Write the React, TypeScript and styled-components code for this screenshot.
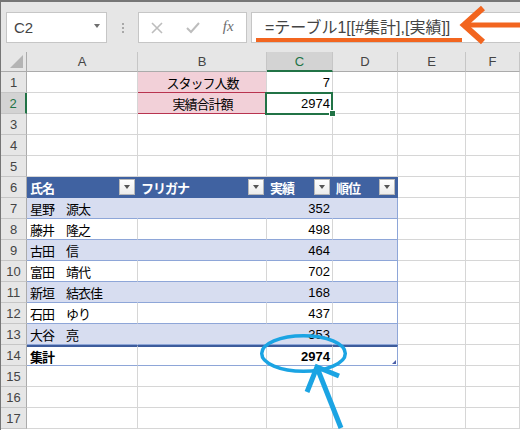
import React from "react";
import styled, { createGlobalStyle, css } from "styled-components";

const GRID = "#d6d6d6";
const HEAD_LINE = "#c6c6c6";
const HEAD_EDGE = "#ababab";
const GREEN = "#217346";
const T_HEAD = "#4062a1";
const T_BAND = "#d7ddf0";
const T_LINE = "#8ea6d8";
const T_DARK = "#3d5c9c";
const PINK = "#f2d0d8";
const RED = "#b8334f";
const ORANGE = "#f2651f";
const BLUE = "#1ba4e3";
const FONT = `"Liberation Sans", "Noto Sans CJK JP", sans-serif`;
const COLS = "26px 111px 129px 66px 65px 68px 1fr";

const GlobalStyle = createGlobalStyle`
  html, body {
    margin: 0;
    padding: 0;
    background: #fff;
  }
  #root {
    width: 520px;
    height: 430px;
    overflow: hidden;
  }
`;

// ! 전체 창
const Frame = styled.div`
  position: relative;
  box-sizing: border-box;
  width: 520px;
  height: 430px;
  border-top: 2px solid #767676;
  border-left: 1px solid #767676;
  background: #e6e6e6;
  overflow: hidden;
  display: flex;
  flex-direction: column;
  font-family: ${FONT};
`;

// 수식 입력줄
const FormulaBar = styled.div`
  box-sizing: border-box;
  height: 50px;
  flex: none;
  display: flex;
  align-items: flex-start;
  padding: 10px 0 0 5px;
`;

const NameBox = styled.div`
  box-sizing: border-box;
  width: 101px;
  height: 31px;
  display: flex;
  align-items: center;
  justify-content: space-between;
  padding: 0 6px 0 7px;
  background: #fff;
  border: 1px solid ${HEAD_LINE};
  font-size: 15px;
  color: #444;
`;

const DropArrow = styled.span`
  width: 0;
  height: 0;
  border-left: 3px solid transparent;
  border-right: 3px solid transparent;
  border-top: 4px solid #6e6e6e;
  margin-top: -4px;
`;

const Grip = styled.div`
  width: 31px;
  height: 31px;
  display: flex;
  flex-direction: column;
  align-items: center;
  justify-content: center;
  gap: 2px;

  i {
    width: 2px;
    height: 2px;
    background: #a8a8a8;
  }
`;

const ButtonBox = styled.div`
  box-sizing: border-box;
  width: 109px;
  height: 31px;
  display: flex;
  background: #fff;
  border: 1px solid ${HEAD_LINE};
`;

const ToolButton = styled.span`
  width: 36px;
  display: flex;
  align-items: center;
  justify-content: center;
`;

const Fx = styled.span`
  font-family: "Liberation Serif", serif;
  font-style: italic;
  font-size: 15px;
  color: #6d6d6d;
  margin-top: -3px;
`;

const FormulaInput = styled.div`
  box-sizing: border-box;
  flex: 1;
  height: 31px;
  margin-left: 4px;
  padding: 0 0 4px 13px;
  display: flex;
  align-items: center;
  background: #fff;
  border: 1px solid ${HEAD_LINE};
  border-right: none;
  font-size: 16px;
  color: #444;
  white-space: nowrap;
  overflow: hidden;
`;

// 시트 격자
const Sheet = styled.div`
  flex: 1;
  display: grid;
  grid-template-columns: ${COLS};
  grid-template-rows: 20px repeat(17, 21px);
  background: #fff;
`;

const Corner = styled.div`
  box-sizing: border-box;
  display: flex;
  align-items: flex-end;
  justify-content: flex-end;
  padding: 3px;
  background: #e6e6e6;
  border-right: 1px solid ${HEAD_EDGE};
  border-bottom: 1px solid ${HEAD_EDGE};
`;

const ColHead = styled.div<{ $sel?: boolean }>`
  box-sizing: border-box;
  display: flex;
  align-items: center;
  justify-content: center;
  background: ${(p) => (p.$sel ? "#d3d3d3" : "#e6e6e6")};
  border-right: 1px solid ${HEAD_LINE};
  border-bottom: ${(p) => (p.$sel ? `2px solid ${GREEN}` : `1px solid ${HEAD_EDGE}`)};
  font-size: 13px;
  color: ${(p) => (p.$sel ? GREEN : "#444")};
`;

const RowHead = styled.div<{ $sel?: boolean }>`
  box-sizing: border-box;
  display: flex;
  align-items: center;
  justify-content: center;
  background: ${(p) => (p.$sel ? "#d3d3d3" : "#e6e6e6")};
  border-right: ${(p) => (p.$sel ? `2px solid ${GREEN}` : `1px solid ${HEAD_EDGE}`)};
  border-bottom: 1px solid ${HEAD_LINE};
  font-size: 13px;
  color: ${(p) => (p.$sel ? GREEN : "#444")};
`;

type CellProps = {
  $fill?: string;
  $align?: "left" | "center" | "right";
  $bold?: boolean;
  $color?: string;
  $bb?: string;
  $br?: string;
  $bt?: string;
  $tight?: boolean;
  $selected?: boolean;
  $grip?: boolean;
};

const Cell = styled.div<CellProps>`
  position: relative;
  box-sizing: border-box;
  min-width: 0;
  display: flex;
  align-items: center;
  justify-content: ${(p) =>
    p.$align === "right" ? "flex-end" : p.$align === "center" ? "center" : "space-between"};
  padding: 0 2px 0 3px;
  background: ${(p) => p.$fill ?? "#fff"};
  border-right: 1px solid ${(p) => p.$br ?? GRID};
  border-bottom: 1px solid ${(p) => p.$bb ?? GRID};
  ${(p) => p.$bt && css`border-top: 2px solid ${p.$bt};`}
  font-size: 13px;
  font-weight: ${(p) => (p.$bold ? 700 : 400)};
  letter-spacing: ${(p) => (p.$tight ? "-1px" : "0")};
  color: ${(p) => p.$color ?? "#000"};
  white-space: nowrap;

  ${(p) =>
    p.$selected &&
    css`
      z-index: 2;
      &::after {
        content: "";
        position: absolute;
        left: -2px;
        top: -1px;
        width: 68px;
        height: 23px;
        box-sizing: border-box;
        border: 2px solid ${GREEN};
      }
      &::before {
        content: "";
        position: absolute;
        right: -4px;
        bottom: -4px;
        width: 5px;
        height: 5px;
        background: ${GREEN};
        border: 1px solid #fff;
        z-index: 3;
      }
    `}

  ${(p) =>
    p.$grip &&
    css`
      &::after {
        content: "";
        position: absolute;
        right: 1px;
        bottom: 1px;
        width: 0;
        height: 0;
        border-left: 4px solid transparent;
        border-bottom: 4px solid #4a5fa8;
      }
    `}
`;

const FilterBtn = styled.span`
  box-sizing: border-box;
  flex: none;
  width: 16px;
  height: 16px;
  display: flex;
  align-items: center;
  justify-content: center;
  background: linear-gradient(#ffffff, #ececec);
  border: 1px solid #b8b8b8;

  &::before {
    content: "";
    width: 0;
    height: 0;
    border-left: 3.5px solid transparent;
    border-right: 3.5px solid transparent;
    border-top: 4px solid #555;
  }
`;

const Overlay = styled.svg`
  position: absolute;
  left: -1px;
  top: -2px;
  pointer-events: none;
  z-index: 10;
`;

const LETTERS = ["A", "B", "C", "D", "E", "F"];
const HEADERS = ["氏名", "フリガナ", "実績", "順位"];
const PEOPLE: [string, number][] = [
  ["星野　源太", 352],
  ["藤井　隆之", 498],
  ["古田　信", 464],
  ["富田　靖代", 702],
  ["新垣　結衣佳", 168],
  ["石田　ゆり", 437],
  ["大谷　亮", 353],
];

function plainCells(r: number, from: number) {
  return LETTERS.slice(from).map((c) => <Cell key={`${c}${r}`} />);
}

function rowCells(r: number) {
  if (r === 1 || r === 2) {
    return [
      <Cell key="A" />,
      <Cell key="B" $fill={PINK} $bb={RED} $align="center" $tight>
        {r === 1 ? "スタッフ人数" : "実績合計額"}
      </Cell>,
      <Cell key="C" $align="right" $selected={r === 2}>
        {r === 1 ? "7" : "2974"}
      </Cell>,
      ...plainCells(r, 3),
    ];
  }
  if (r === 6) {
    return [
      ...HEADERS.map((h) => (
        <Cell key={h} $fill={T_HEAD} $br={T_HEAD} $bb={T_HEAD} $color="#fff" $bold $tight>
          <span>{h}</span>
          <FilterBtn />
        </Cell>
      )),
      ...plainCells(r, 4),
    ];
  }
  if (r >= 7 && r <= 13) {
    const [name, score] = PEOPLE[r - 7];
    const band = r % 2 === 1;
    const fill = band ? T_BAND : "#fff";
    const inner = band ? T_BAND : GRID;
    return [
      <Cell key="A" $fill={fill} $br={inner} $bb={T_LINE} $tight>
        {name}
      </Cell>,
      <Cell key="B" $fill={fill} $br={inner} $bb={T_LINE} />,
      <Cell key="C" $fill={fill} $br={inner} $bb={T_LINE} $align="right">
        {score}
      </Cell>,
      <Cell key="D" $fill={fill} $br={T_LINE} $bb={T_LINE} />,
      ...plainCells(r, 4),
    ];
  }
  if (r === 14) {
    return [
      <Cell key="A" $bt={T_DARK} $bb={T_LINE} $bold $tight>
        集計
      </Cell>,
      <Cell key="B" $bt={T_DARK} $bb={T_LINE} />,
      <Cell key="C" $bt={T_DARK} $bb={T_LINE} $align="right" $bold>
        2974
      </Cell>,
      <Cell key="D" $bt={T_DARK} $bb={T_LINE} $br={T_LINE} $grip />,
      ...plainCells(r, 4),
    ];
  }
  return plainCells(r, 0);
}

export default function App() {
  const rows = Array.from({ length: 17 }, (_, i) => i + 1);
  return (
    <>
      <GlobalStyle />
      <Frame>
        <FormulaBar>
          <NameBox>
            <span>C2</span>
            <DropArrow />
          </NameBox>
          <Grip>
            <i />
            <i />
            <i />
          </Grip>
          <ButtonBox>
            <ToolButton>
              <svg width="12" height="12" viewBox="0 0 12 12">
                <path d="M1 1 L11 11 M11 1 L1 11" stroke="#bdbdbd" strokeWidth="1.6" />
              </svg>
            </ToolButton>
            <ToolButton>
              <svg width="14" height="12" viewBox="0 0 14 12">
                <path d="M1 6 L5 10 L13 1" fill="none" stroke="#bdbdbd" strokeWidth="2" />
              </svg>
            </ToolButton>
            <ToolButton>
              <Fx>fx</Fx>
            </ToolButton>
          </ButtonBox>
          <FormulaInput>=テーブル1[[#集計],[実績]]</FormulaInput>
        </FormulaBar>

        <Sheet>
          <Corner>
            <svg width="13" height="13" viewBox="0 0 13 13">
              <path d="M13 0 L13 13 L0 13 Z" fill="#b4b4b4" />
            </svg>
          </Corner>
          {LETTERS.map((c) => (
            <ColHead key={c} $sel={c === "C"}>
              {c}
            </ColHead>
          ))}
          {rows.map((r) => (
            <React.Fragment key={r}>
              <RowHead $sel={r === 2}>{r}</RowHead>
              {rowCells(r)}
            </React.Fragment>
          ))}
        </Sheet>

        <Overlay width="520" height="430" viewBox="0 0 520 430">
          <line x1="256" y1="40" x2="462" y2="40" stroke={ORANGE} strokeWidth="4" />
          <line x1="464" y1="25" x2="520" y2="25" stroke={ORANGE} strokeWidth="5" />
          <polyline points="483,8 464,25 483,42" fill="none" stroke={ORANGE} strokeWidth="6" />
          <ellipse cx="303.5" cy="353.5" rx="41.8" ry="17.8" fill="none" stroke={BLUE} strokeWidth="3.5" />
          <line x1="341" y1="428" x2="318" y2="370" stroke={BLUE} strokeWidth="5" />
          <polyline points="307,392 317,367 339,376" fill="none" stroke={BLUE} strokeWidth="5" />
        </Overlay>
      </Frame>
    </>
  );
}
